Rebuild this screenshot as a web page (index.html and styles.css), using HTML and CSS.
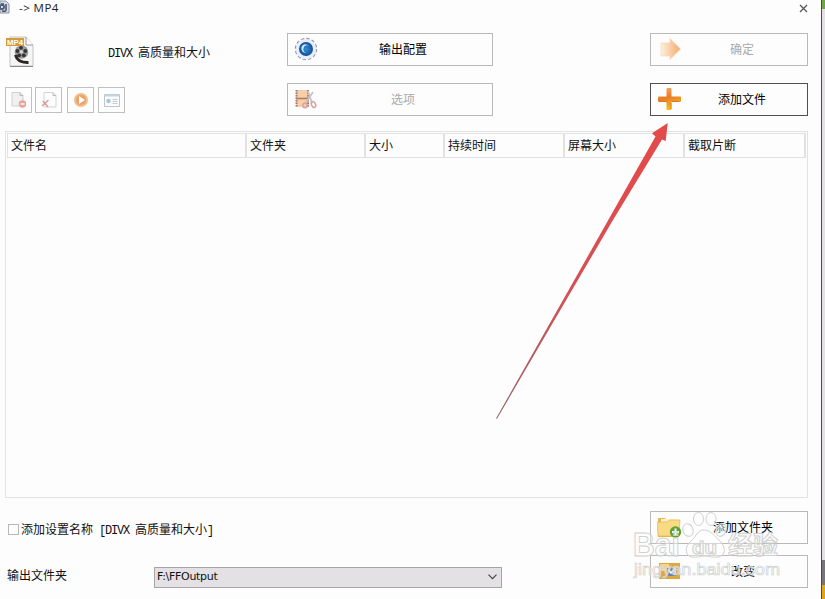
FILE: index.html
```html
<!DOCTYPE html>
<html lang="zh-CN">
<head>
<meta charset="utf-8">
<title>MP4</title>
<link rel="stylesheet" href="styles.css">
</head>
<body>
<div class="screen">
<main class="window">
  <header class="titlebar">
    <svg class="app-icon" width="12" height="14" viewBox="0 0 12 14"><path d="M0 1h6l3 3v9H0z" fill="#d5dce5" stroke="#8995a5"/><circle cx="2" cy="7" r="3" fill="#526078"/><path d="M1 4h3M6 4v6q0 2-4 1" stroke="#43506a" fill="none" stroke-width="1.5"/><circle cx="2" cy="7" r="1" fill="#fff"/></svg>
    <span class="title">-&gt; MP4</span>
    <svg class="close" width="9" height="9" viewBox="0 0 9 9"><path d="M1 1l7 7M8 1L1 8" stroke="#555" stroke-width="1.3"/></svg>
  </header>

  <section class="top">
    <div class="profile">
      <div class="profile-row">
        <svg width="28" height="34" viewBox="0 0 28 34">
          <path d="M4 2h16l7 8v21H4z" fill="#f5f5f5" stroke="#c4c4c4"/><path d="M4 31.500h23" stroke="#888"/><path d="M20 2v8h7" fill="#fff" stroke="#999"/>
          <circle cx="15.500" cy="17" r="6.800" fill="#999"/><g fill="#333"><circle cx="15" cy="12.800" r="1.900"/><circle cx="11.400" cy="16" r="1.900"/><circle cx="19.300" cy="16" r="1.900"/><circle cx="13.200" cy="20.300" r="1.900"/><circle cx="17.800" cy="20.300" r="1.900"/></g><circle cx="15.400" cy="16.800" r="1.500" fill="#ddd"/>
          <path d="M9.500 20q2 8 13 7.500" fill="none" stroke="#2c2423" stroke-width="3"/><rect y="3" width="18" height="8" fill="#d59a3c"/>
          <text class="badge" x="1" y="9.900" textLength="16" lengthAdjust="spacingAndGlyphs">MP4</text>
        </svg>
        <span class="profile-name"><span class="mono">DIVX </span>高质量和大小</span>
      </div>
      <div class="tools">
        <button class="tool"><svg width="16" height="18" viewBox="0 0 16 18"><path d="M1 1.500h8l3 3V15H1z" fill="#f0f0f0" stroke="#d0d0d0"/><path d="M9 1.500v3h3" fill="none" stroke="#b8b8b8"/><circle cx="11.500" cy="13" r="3.700" fill="#e8a39c"/><path d="M9.500 13h4" stroke="#fff" stroke-width="1.500"/></svg></button>
        <button class="tool"><svg width="16" height="18" viewBox="0 0 16 18"><path d="M3 1.500h9l3 3V16H3z" fill="#fcfcfc" stroke="#d5d5d5"/><path d="M12 1.500v3h3" fill="none" stroke="#bbb"/><path d="M2 10l5 6M7.500 9L1 15" stroke="#dc9d96" stroke-width="1.500"/></svg></button>
        <button class="tool"><svg width="16" height="18" viewBox="0 0 16 18"><circle cx="8" cy="9" r="7" fill="#f0bd8e"/><circle cx="8" cy="9" r="5" fill="#eda267"/><path d="M6 5l6 4-6 4z" fill="#fff"/></svg></button>
        <button class="tool"><svg width="16" height="18" viewBox="0 0 16 18"><path d="M.5 3.500h15v12H.5z" fill="#fbfbfb" stroke="#bcc4cc"/><path d="M1 4.500h14" stroke="#cdd3da" stroke-width="2"/><circle cx="4.500" cy="10" r="2.300" fill="#a5cae6"/><path d="M8.500 8.500h5M8.500 10.500h5M8.500 12.500h5" stroke="#c3cbd3"/></svg></button>
      </div>
    </div>
    <div class="stack middle">
      <button class="btn"><svg class="icon" width="24" height="24" viewBox="0 0 24 24"><defs><radialGradient id="lens"><stop stop-color="#2f8fd3"/><stop offset="1" stop-color="#164d98"/></radialGradient></defs><circle cx="12" cy="12" r="10" fill="none" stroke="#8b91aa" stroke-width="2.400" stroke-dasharray="3.200 2.036"/><circle cx="12" cy="12" r="10.300" fill="#e9eefa"/><circle cx="12" cy="12" r="7" fill="url(#lens)"/><path d="M15.500 9q-5-2-6 2t3 5q-6-.5-5-6 2-5 8-1z" fill="#c9f1ff"/></svg><span>输出配置</span></button>
      <button class="btn off"><svg class="icon" width="24" height="24" viewBox="0 0 24 24"><path d="M2 3h13v17H2z" fill="#f8cda9"/><path d="M2.500 3v17M14 3v17" stroke="#987d70" stroke-width="2" stroke-dasharray="1.500 1"/><path d="M2 11.500h13" stroke="#a67b68" stroke-width="1.500"/><path d="M14 4l4 12M19 5l-8 12" stroke="#c7c3c6" stroke-width="1.800"/><g fill="none" stroke="#dda0a0" stroke-width="1.500"><circle cx="11" cy="18.500" r="2.200"/><ellipse cx="19.500" cy="17.500" rx="2" ry="3" transform="rotate(-25 19.500 17.500)"/></g></svg><span>选项</span></button>
    </div>
    <div class="stack right">
      <button class="btn off"><svg class="icon" width="24" height="24" viewBox="0 0 24 24"><defs><linearGradient id="go"><stop stop-color="#fff0dc"/><stop offset="1" stop-color="#f4a96d"/></linearGradient></defs><path d="M4 6h9V1.500L23.500 12 13 22.500V19H4z" fill="url(#go)" stroke="#f5d6bd" stroke-width=".7"/></svg><span>确定</span></button>
      <button class="btn focus"><svg class="icon" width="24" height="24" viewBox="0 0 24 24"><defs><linearGradient id="plus" x2=".3" y2="1"><stop stop-color="#f7b06c"/><stop offset=".5" stop-color="#e87c28"/><stop offset="1" stop-color="#f9b818"/></linearGradient></defs><path d="M10.500 1h3q1 0 1 1v7.500H23q1 0 1 1V14q0 1-1 1h-8.500v7q0 1-1 1h-3q-1 0-1-1v-7H2q-1 0-1-1v-3.500q0-1 1-1h7.500V2q0-1 1-1z" fill="url(#plus)"/><path d="M2 14.500h7.500M15 14.500h7M14 16v6" stroke="#c96e2b" stroke-width=".7" fill="none"/></svg><span>添加文件</span></button>
    </div>
  </section>

  <section class="list">
    <div class="columns"><span>文件名</span><span>文件夹</span><span>大小</span><span>持续时间</span><span>屏幕大小</span><span>截取片断</span></div>
  </section>

  <footer class="bottom">
    <div class="settings">
      <label class="append"><i class="box"></i><span>添加设置名称<span class="mono"> [DIVX </span>高质量和大小<span class="mono">]</span></span></label>
      <div class="output"><span>输出文件夹</span><div class="select"><span>F:\FFOutput</span><svg width="9" height="6" viewBox="0 0 9 6"><path d="M.5.7l4 4 4-4" fill="none" stroke="#444" stroke-width="1.200"/></svg></div></div>
    </div>
    <div class="actions">
      <button class="btn"><svg class="icon" width="26" height="26" viewBox="0 0 26 26"><path d="M1 4h7l2 2h12v17H1z" fill="#e6b950"/><path d="M4 5h16v5H4z" fill="#fff2c5"/><path d="M0 8h10l3-2h10l-1 16H1z" fill="#fada83" stroke="#dfb251" stroke-width=".7"/><circle cx="18.500" cy="18" r="5.700" fill="#5aa532"/><path d="M18.500 14.500v7M15 18h7" stroke="#fff" stroke-width="2"/></svg><span>添加文件夹</span></button>
      <button class="btn"><svg class="icon" width="26" height="26" viewBox="0 0 26 26"><path d="M2 5h21v16H2z" fill="#dca93f"/><path d="M3 6h9v7H3z" fill="#f4d58b"/><path d="M10 10h9v8h-9z" fill="#6188b0"/><path d="M11 11l3 4 4-5v7" stroke="#fff" stroke-width="1.500" fill="none"/></svg><span>改变</span></button>
    </div>
  </footer>
</main>
<aside class="backdrop"><i class="green"></i><i class="pale"></i><i class="gray"></i><i class="gold"></i></aside>

<svg class="arrow" width="175" height="300" viewBox="0 0 175 300"><defs><linearGradient id="arrow" x1="0" y1="1" x2=".6" y2="0"><stop stop-color="#98636a"/><stop offset=".5" stop-color="#d35055"/><stop offset="1" stop-color="#e34b4b"/></linearGradient></defs><path d="M1 298.500L160.500 16.500 157 13.300 172.700 3 170.700 21 167 19.500 118 100 59.500 200 2 298.700z" fill="url(#arrow)"/></svg>

<svg class="watermark" width="165" height="74" viewBox="0 0 165 74">
  <g class="mark">
    <ellipse cx="56" cy="20" rx="5" ry="6.500" transform="rotate(-20 56 20)"/><ellipse cx="66.500" cy="9" rx="5" ry="6.500"/><ellipse cx="79" cy="9" rx="5" ry="6.500"/><ellipse cx="89" cy="20" rx="5" ry="6.500" transform="rotate(20 89 20)"/>
    <path d="M72 20c-7 0-8 7-13 11-7 6-6 15 1 16 5 1 8-1 13-1s8 2 13 1c8-1 8-10 2-16-5-4-9-11-16-11z"/>
    <text x="1" y="46" class="latin" textLength="47" lengthAdjust="spacingAndGlyphs">Bai</text><text x="60" y="44" class="du" textLength="25" lengthAdjust="spacingAndGlyphs">du</text><text x="96" y="44" class="han">经验</text>
    <text x="2" y="65" class="site" textLength="146" lengthAdjust="spacingAndGlyphs">jingyan.baidu.com</text>
  </g>
</svg>
</div>
</body>
</html>
```
FILE: styles.css
```css
* { box-sizing: border-box; }
body { margin: 0; font: 12px/16px "Liberation Sans", "Noto Sans CJK SC", sans-serif; color: #111; background: #fdfdfd; }
svg { display: block; flex: none; }
.screen { position: relative; display: flex; width: 825px; height: 599px; overflow: hidden; }
.window { width: 822px; border-right: 1px solid #4c4b4d; background: #fdfdfd; display: flex; flex-direction: column; }
.titlebar { display: flex; align-items: flex-start; height: 33px; padding-right: 13px; }
.title { margin-left: 7px; font: 11.5px/16px "Open Sans", sans-serif; letter-spacing: .45px; color: #222; }
.close { margin: 4px 0 0 auto; }
.top { display: flex; height: 98px; padding-left: 5px; }
.profile { width: 282px; }
.profile-row { display: flex; align-items: center; height: 37px; padding-left: 1px; }
.profile-name { margin: 3px 0 0 74px; white-space: pre; }
.mono { font: 12px/16px "Liberation Mono", monospace; letter-spacing: -1.2px; white-space: pre; }
.badge { font: bold 8px "Liberation Sans", sans-serif; fill: #fff; }
.tools { display: flex; gap: 3px; margin-top: 17px; }
.tool { display: flex; align-items: center; justify-content: center; width: 27px; height: 26px; padding: 0; border: 1px solid #c0c0c0; background: #fdfdfd; }
.tool:nth-child(3) { margin-left: 2px; }
.tool:nth-child(4) { margin-left: 1px; }
.stack { display: flex; flex-direction: column; gap: 17px; }
.middle { width: 206px; }
.right { width: 158px; margin-left: 157px; }
.btn { display: flex; align-items: center; width: 100%; height: 33px; padding: 0 4px 1px 6px; border: 1px solid #b9b9b9; background: #fdfdfd; font: inherit; color: #000; }
.btn span { flex: 1; padding-top: 2px; text-align: center; }
.btn.off { color: #aaa; }
.btn.focus { border-color: #505050; }
.list { height: 367px; width: 803px; margin-left: 5px; padding: 1px; border: 1px solid #e2e2e2; }
.columns { display: grid; grid-template-columns: 239px 119px 79px 120px 120px 121px; height: 25px; border: 1px solid #e2e2e2; border-right: 0; }
.columns span { padding: 4px 0 0 3px; border-right: 2px solid #e2e2e2; }
.bottom { display: flex; justify-content: space-between; padding: 13px 13px 0 7px; }
.settings { width: 495px; }
.append { display: flex; align-items: center; height: 37px; padding-left: 1px; gap: 2px; white-space: pre; }
.append > span { padding-top: 1px; }
.box { width: 11px; height: 11px; border: 1px solid #b8b8b8; }
.output { display: flex; align-items: center; height: 20px; margin-top: 19px; }
.output > span { width: 147px; margin-top: -2px; }
.select { display: flex; flex: 1; align-items: center; justify-content: space-between; height: 21px; padding: 0 4px 0 2px; border: 1px solid #a5a5a5; background: #e3e1e4; font: 11px/18px "DejaVu Sans", sans-serif; letter-spacing: -.3px; }
.actions { display: flex; flex-direction: column; gap: 11px; width: 158px; }
.backdrop { display: flex; flex-direction: column; width: 3px; background: #e4e1e5; }
.green { height: 9px; background: #6fa643; }
.pale { flex: 1; }
.gray { height: 25px; background: #77737a; }
.gold { height: 14px; background: #dda51e; }
.arrow { position: absolute; left: 495px; top: 120px; }
.watermark { position: absolute; left: 632px; top: 510px; }
.mark { fill: #fff; fill-opacity: .4; stroke: #d0d0d0; stroke-width: 1; }
.latin { font: bold 33px "Liberation Sans", sans-serif; }
.du { font: bold 18px "Liberation Sans", sans-serif; }
.han { font: bold 25px "Noto Sans CJK SC", sans-serif; }
.site { font: 17px "Liberation Sans", sans-serif; stroke-width: .7; fill-opacity: .6; }
```
